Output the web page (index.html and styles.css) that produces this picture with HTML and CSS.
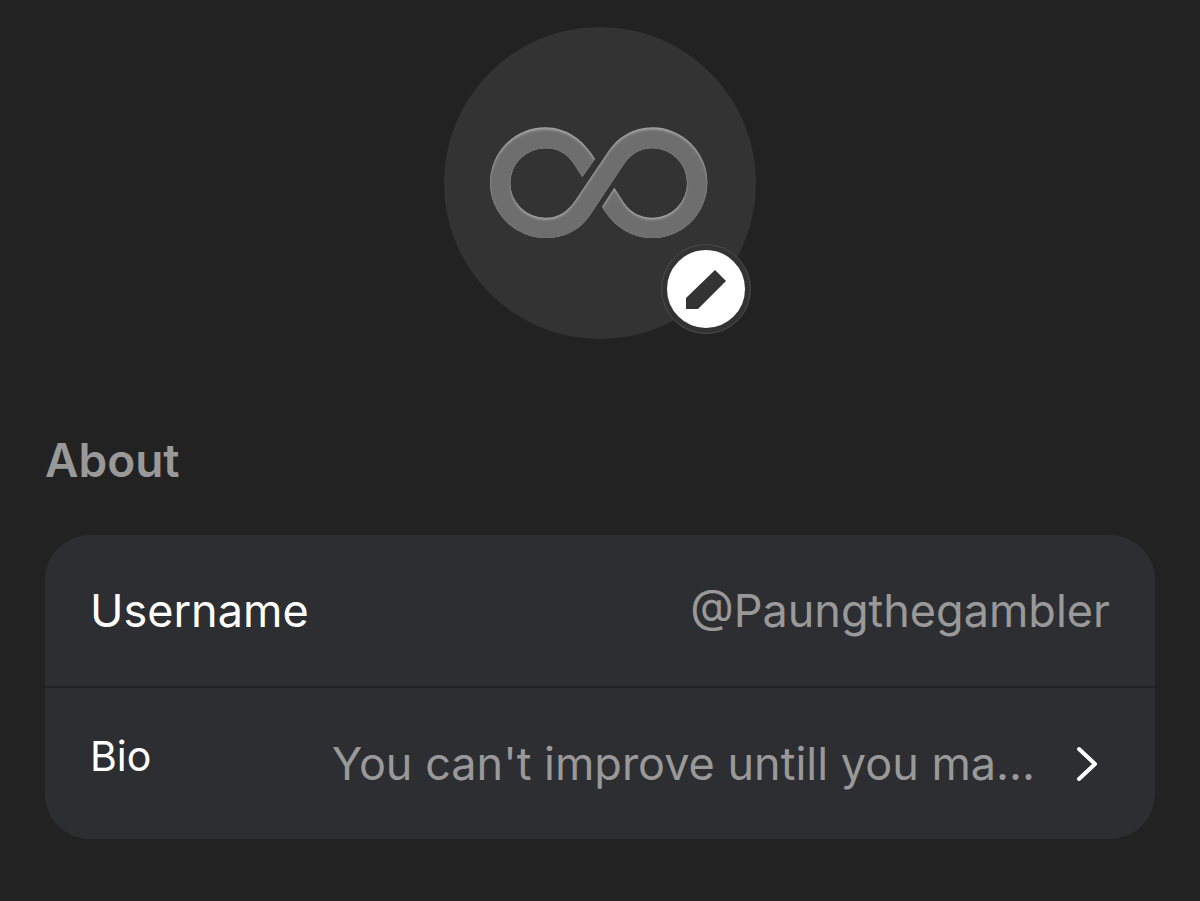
FILE: index.html
```html
<!DOCTYPE html>
<html lang="en">
<head>
  <meta charset="UTF-8">
  <meta name="viewport" content="width=device-width, initial-scale=1">
  <title>Edit profile</title>
  <link rel="stylesheet" href="styles.css">
</head>
<body>

<main class="profile">

  <!-- Avatar -->
  <div class="avatar">
    <svg class="avatar-logo" viewBox="0 9 720 420" aria-hidden="true">
      <defs>
        <path id="infinity" d="M345 147C310 88 258 52 196 52A166 166 0 0 0 30 218A166 166 0 0 0 196 384C254 384 301 360 333 311L430 165C452 133 480 115 518 115A103 104 0 0 1 621 219A103 104 0 0 1 518 323C482 323 452 307 432 278L403 233L366 290C400 350 455 384 518 384A165 166 0 0 0 682 218A165 166 0 0 0 518 52C460 52 414 80 382 128L285 272C262 305 235 323 196 323A105 104 0 0 1 91 219A105 104 0 0 1 196 115C235 115 262 133 280 160L307 201Z"/>
        <clipPath id="infinity-clip"><use href="#infinity"/></clipPath>
        <filter id="soften"><feGaussianBlur stdDeviation="3"/></filter>
      </defs>
      <use href="#infinity" fill="#a6a6a6"/>
      <g clip-path="url(#infinity-clip)">
        <use href="#infinity" y="7" fill="#6e6e6e" stroke="#6e6e6e" stroke-width="2" filter="url(#soften)"/>
      </g>
    </svg>
    <button class="edit-btn" type="button" aria-label="Edit photo">
      <svg class="edit-icon" viewBox="0 -1 40 40" aria-hidden="true">
        <path d="M29 0L40 11L12 39H0V28Z"/>
      </svg>
    </button>
  </div>

  <!-- About -->
  <section class="about">
    <h2>About</h2>
    <div class="card">
      <div class="row">
        <span class="label">Username</span>
        <span class="value">@Paungthegambler</span>
      </div>
      <a class="row" href="#bio">
        <span class="label label-small">Bio</span>
        <span class="value">You can't improve untill you ma...</span>
        <svg class="chevron" viewBox="0 0 24 36" aria-hidden="true">
          <path d="M4 3L20 18L4 33"/>
        </svg>
      </a>
    </div>
  </section>

</main>

</body>
</html>
```
FILE: styles.css
```css
* {
  margin: 0;
  padding: 0;
  box-sizing: border-box;
}

body {
  font-family: Inter, "Liberation Sans", sans-serif;
  font-size: 45px;
  line-height: 56px;
  background-color: #222222;
  color: #ffffff;
}

.profile {
  padding: 27px 45px 60px;
}

.avatar {
  position: relative;
  display: flex;
  align-items: center;
  justify-content: center;
  width: 312px;
  height: 312px;
  margin: 0 auto;
  border-radius: 50%;
  background-color: #333333;
}

.avatar-logo {
  width: 240px;
  height: 140px;
}

.edit-btn {
  position: absolute;
  right: 5px;
  bottom: 5px;
  display: flex;
  align-items: center;
  justify-content: center;
  width: 90px;
  height: 90px;
  border: 6px solid #333333;
  border-radius: 50%;
  background-color: #ffffff;
  outline: 1px solid #4a4a4a;
  outline-offset: -1px;
  cursor: pointer;
}

.edit-icon {
  width: 40px;
  height: 40px;
  fill: #333333;
}

.about {
  margin-top: 93px;
}

h2 {
  font-size: 46px;
  font-weight: 600;
  color: #999999;
}

.card {
  margin-top: 47px;
  border-radius: 45px;
  background-color: #2d2e32;
  overflow: hidden;
}

.row {
  display: flex;
  align-items: center;
  gap: 40px;
  height: 151px;
  padding: 0 45px;
  color: #ffffff;
  text-decoration: none;
}

.row + .row {
  height: 153px;
  padding-right: 56px;
  border-top: 2px solid #222222;
}

.label-small {
  font-size: 41px;
  padding-bottom: 16px;
}

.value {
  flex: 1;
  min-width: 0;
  text-align: right;
  white-space: nowrap;
  overflow: hidden;
  text-overflow: ellipsis;
  color: #999999;
}

.chevron {
  width: 24px;
  height: 36px;
  fill: none;
  stroke: #ffffff;
  stroke-width: 4;
  stroke-linecap: round;
  stroke-linejoin: round;
}
```
